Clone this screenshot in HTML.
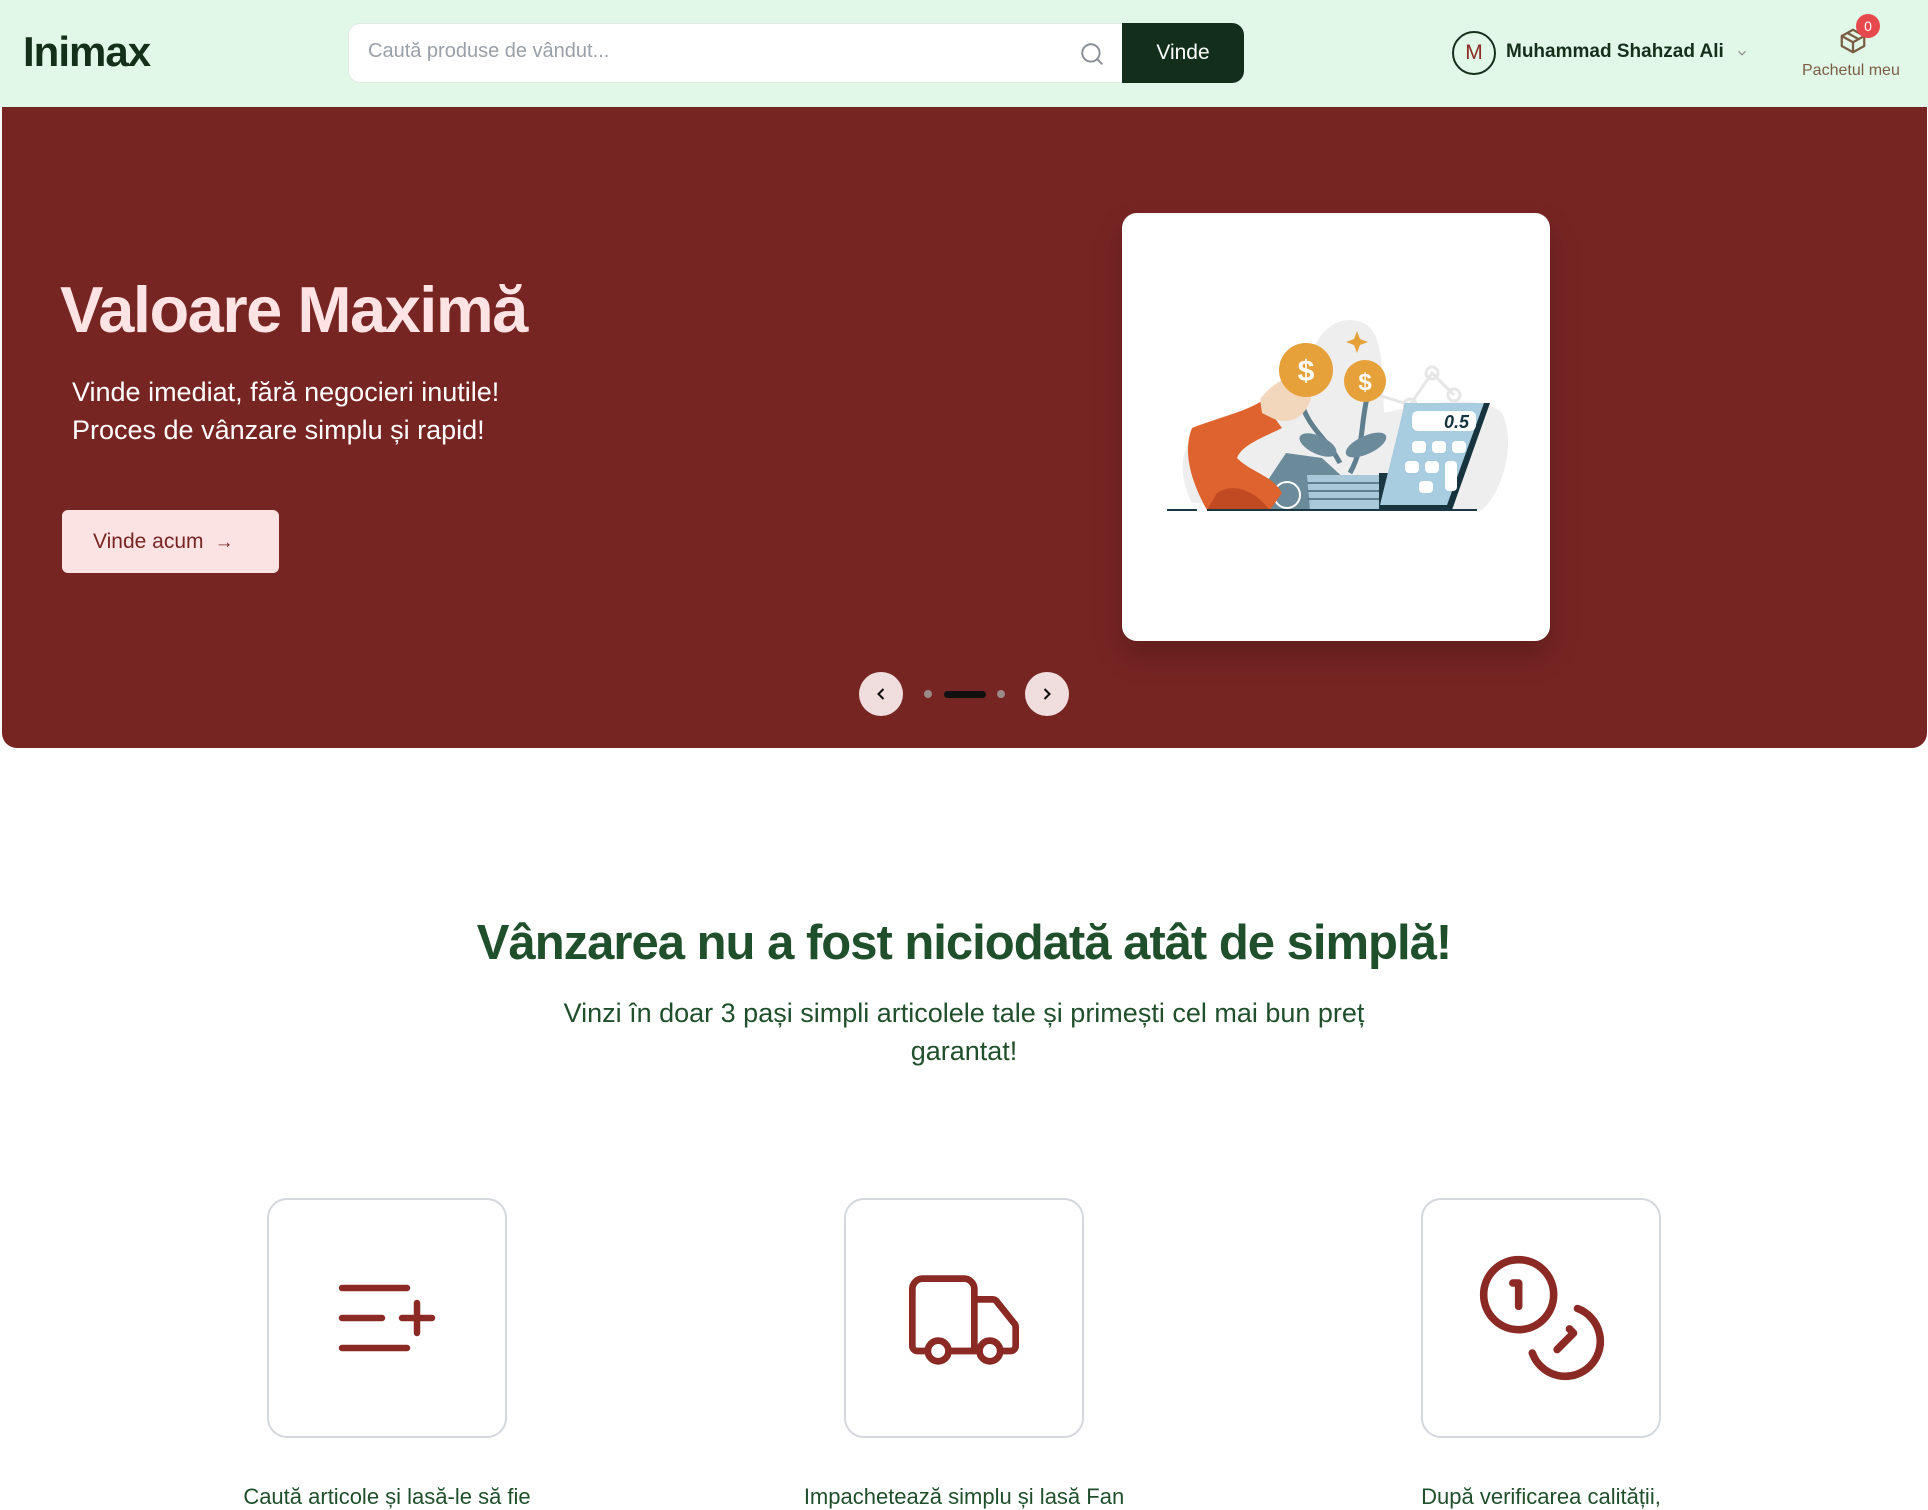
<!DOCTYPE html>
<html><head><meta charset="utf-8"><style>
*{margin:0;padding:0;box-sizing:border-box}
body{width:1928px;height:1508px;overflow:hidden;background:#fff;font-family:"Liberation Sans",sans-serif;position:relative}
.a{position:absolute}
</style></head><body>
<div class="a" style="left:0;top:0;width:1928px;height:107px;background:#e1f8e8"></div>
<div class="a" style="left:23px;top:28px;font-size:42px;font-weight:bold;color:#14301b;letter-spacing:-1px">Inimax</div>
<div class="a" style="left:348px;top:23px;width:800px;height:60px;background:#fff;border:1px solid #e2e8e4;border-radius:12px"></div>
<div class="a" style="left:368px;top:40px;font-size:20px;color:#9aa0a8">Caută produse de vândut...</div>
<svg class="a" style="left:1079px;top:41px" width="26" height="26" viewBox="0 0 24 24" fill="none" stroke="#8a8f96" stroke-width="1.8" stroke-linecap="round"><circle cx="11" cy="11" r="8"/><path d="m21 21-4.3-4.3"/></svg>
<div class="a" style="left:1122px;top:23px;width:122px;height:60px;background:#132f1b;border-radius:0 12px 12px 0;color:#fff;font-size:21px;line-height:60px;text-align:center">Vinde</div>
<div class="a" style="left:1452px;top:31px;width:44px;height:44px;border:2px solid #14301b;border-radius:50%;color:#8b2a24;font-size:21px;line-height:40px;text-align:center">M</div>
<div class="a" style="left:1506px;top:41px;font-size:19px;font-weight:bold;color:#14301b">Muhammad Shahzad Ali</div>
<svg class="a" style="left:1735px;top:46px" width="14" height="14" viewBox="0 0 24 24" fill="none" stroke="#888" stroke-width="2"><path d="m6 9 6 6 6-6"/></svg>
<svg class="a" style="left:1838px;top:26px" width="30" height="30" viewBox="0 0 24 24" fill="none" stroke="#7a5e44" stroke-width="1.8" stroke-linejoin="round"><path d="M21 8 12 3 3 8v8l9 5 9-5z"/><path d="M3 8l9 5 9-5M12 13v8M7.5 5.5l9 5"/></svg>
<div class="a" style="left:1856px;top:14px;width:24px;height:24px;background:#e5484d;border-radius:50%;color:#fff;font-size:14px;line-height:24px;text-align:center">0</div>
<div class="a" style="left:1802px;top:62px;font-size:16px;color:#7a5e44">Pachetul meu</div>

<div class="a" style="left:2px;top:107px;width:1925px;height:641px;background:#772523;border-radius:0 0 15px 15px"></div>
<div class="a" style="left:60px;top:272px;font-size:65px;font-weight:bold;color:#fde3e3;letter-spacing:-1.5px">Valoare Maximă</div>
<div class="a" style="left:72px;top:373px;font-size:27px;line-height:38px;color:#fff">Vinde imediat, fără negocieri inutile!<br>Proces de vânzare simplu și rapid!</div>
<div class="a" style="left:62px;top:510px;width:217px;height:63px;background:#fbe3e3;border-radius:6px;color:#772523;font-size:21px;line-height:63px;padding-left:31px">Vinde acum <span style="font-size:19px">&nbsp;→</span></div>

<div class="a" style="left:1122px;top:213px;width:428px;height:428px;background:#fff;border-radius:15px;box-shadow:0 15px 30px rgba(0,0,0,.2);overflow:hidden">
<svg width="428" height="428" viewBox="0 0 428 428">
<path d="M70 290 C50 250 60 210 120 198 C150 190 175 170 190 140 C200 110 225 100 245 112 C262 125 260 160 262 200 C300 190 360 180 380 200 C395 230 380 280 360 297 Z" fill="#eeeeee"/>
<path d="M250 180 L288 192 L310 160 L332 182" fill="none" stroke="#e6e6e6" stroke-width="3"/>
<circle cx="310" cy="160" r="6" fill="none" stroke="#e6e6e6" stroke-width="3"/><circle cx="332" cy="182" r="6" fill="none" stroke="#e6e6e6" stroke-width="3"/><circle cx="288" cy="192" r="6" fill="none" stroke="#e6e6e6" stroke-width="3"/>
<path d="M178 185 C185 215 205 225 218 250 M245 185 C238 215 242 235 228 260" stroke="#5f7f8f" stroke-width="5" fill="none"/>
<ellipse cx="196" cy="232" rx="20" ry="9" fill="#6b8a9a" transform="rotate(25 196 232)"/>
<ellipse cx="244" cy="232" rx="22" ry="9" fill="#6b8a9a" transform="rotate(-25 244 232)"/>
<path d="M164 240 L200 245 L225 268 L215 297 L148 297 L144 270Z" fill="#6b8a9a"/>
<circle cx="165" cy="282" r="13" fill="none" stroke="#fff" stroke-width="2"/>
<path d="M185 262 L292 262 L292 297 L188 297Z" fill="#a9c8da"/>
<path d="M185 270h107M185 278h107M185 286h107" stroke="#5f7f8f" stroke-width="2"/>
<rect x="257" y="260" width="34" height="37" fill="#1a3844"/>
<path d="M283 190 L368 190 L330 297 L258 297Z" fill="#16333e"/>
<path d="M283 190 L362 190 L325 292 L258 292Z" fill="#a9cde0"/>
<rect x="290" y="198" width="64" height="20" rx="6" fill="#fff"/>
<text x="322" y="215" font-family="Liberation Sans" font-size="18" font-style="italic" font-weight="bold" fill="#16333e">0.5</text>
<g fill="#fff"><rect x="290" y="228" width="14" height="12" rx="4"/><rect x="310" y="228" width="14" height="12" rx="4"/><rect x="330" y="228" width="14" height="12" rx="4"/><rect x="283" y="248" width="14" height="12" rx="4"/><rect x="303" y="248" width="14" height="12" rx="4"/><rect x="323" y="248" width="12" height="30" rx="4"/><rect x="297" y="268" width="14" height="12" rx="4"/></g>
<path d="M70 215 C95 205 120 200 140 188 L160 215 C140 225 120 232 115 245 C130 260 150 262 160 280 L148 297 L85 297 C70 270 60 240 70 215Z" fill="#de632e"/>
<path d="M95 280 C110 270 130 275 148 297 L85 297Z" fill="#c24a22"/>
<path d="M138 186 C150 170 170 160 185 158 C195 165 192 195 175 205 C160 212 150 205 140 200Z" fill="#f2d7bd"/>
<circle cx="184" cy="157" r="27" fill="#e6a13a"/><text x="184" y="168" text-anchor="middle" font-family="Liberation Sans" font-size="30" font-weight="bold" fill="#fff">$</text>
<circle cx="243" cy="168" r="21" fill="#e6a13a"/><text x="243" y="177" text-anchor="middle" font-family="Liberation Sans" font-size="24" font-weight="bold" fill="#fff">$</text>
<path d="M45 297h30M85 297h270" stroke="#1a3844" stroke-width="2"/>
<path d="M235 118l3 8 8 3-8 3-3 8-3-8-8-3 8-3z" fill="#e6a13a"/>
</svg></div>

<div class="a" style="left:859px;top:672px;width:44px;height:44px;background:#f0dede;border-radius:50%"></div>
<svg class="a" style="left:871px;top:684px" width="20" height="20" viewBox="0 0 24 24" fill="none" stroke="#111" stroke-width="2.5"><path d="m15 18-6-6 6-6"/></svg>
<div class="a" style="left:924px;top:690px;width:8px;height:8px;background:#9a8a8a;border-radius:50%"></div>
<div class="a" style="left:944px;top:691px;width:42px;height:7px;background:#111;border-radius:4px"></div>
<div class="a" style="left:997px;top:690px;width:8px;height:8px;background:#9a8a8a;border-radius:50%"></div>
<div class="a" style="left:1025px;top:672px;width:44px;height:44px;background:#f0dede;border-radius:50%"></div>
<svg class="a" style="left:1037px;top:684px" width="20" height="20" viewBox="0 0 24 24" fill="none" stroke="#111" stroke-width="2.5"><path d="m9 18 6-6-6-6"/></svg>

<div class="a" style="left:0;top:915px;width:1928px;text-align:center;font-size:49px;font-weight:bold;color:#1f4f2b;letter-spacing:-1px">Vânzarea nu a fost niciodată atât de simplă!</div>
<div class="a" style="left:514px;top:994px;width:900px;text-align:center;font-size:27px;line-height:38px;color:#1f4f2b">Vinzi în doar 3 pași simpli articolele tale și primești cel mai bun preț garantat!</div>

<div class="a" style="left:267px;top:1198px;width:240px;height:240px;border:2px solid #d4d7dc;border-radius:20px"></div>
<div class="a" style="left:844px;top:1198px;width:240px;height:240px;border:2px solid #d4d7dc;border-radius:20px"></div>
<div class="a" style="left:1421px;top:1198px;width:240px;height:240px;border:2px solid #d4d7dc;border-radius:20px"></div>
<svg class="a" style="left:327px;top:1258px" width="120" height="120" viewBox="0 0 24 24" fill="none" stroke="#8b2a24" stroke-width="1.3" stroke-linecap="round"><path d="M11 12H3M16 6H3M16 18H3M18 9v6M21 12h-6"/></svg>
<svg class="a" style="left:902px;top:1258px" width="124" height="124" viewBox="0 0 24 24" fill="none" stroke="#8b2a24" stroke-width="1.3" stroke-linecap="round" stroke-linejoin="round"><path d="M14 18V6a2 2 0 0 0-2-2H4a2 2 0 0 0-2 2v11a1 1 0 0 0 1 1h2M15 18H9M19 18h2a1 1 0 0 0 1-1v-3.65a1 1 0 0 0-.22-.624l-3.48-4.35A1 1 0 0 0 17.52 8H14"/><circle cx="17" cy="18" r="2"/><circle cx="7" cy="18" r="2"/></svg>
<svg class="a" style="left:1472px;top:1248px" width="140" height="140" viewBox="0 0 24 24" fill="none" stroke="#8b2a24" stroke-width="1.3" stroke-linecap="round" stroke-linejoin="round"><circle cx="8" cy="8" r="6"/><path d="M18.09 10.37A6 6 0 1 1 10.34 18M7 6h1v4M16.71 13.88l.7.71-2.82 2.82"/></svg>

<div class="a" style="left:187px;top:1484px;width:400px;text-align:center;font-size:22px;color:#1f4f2b">Caută articole și lasă-le să fie</div>
<div class="a" style="left:764px;top:1484px;width:400px;text-align:center;font-size:22px;color:#1f4f2b">Impachetează simplu și lasă Fan</div>
<div class="a" style="left:1341px;top:1484px;width:400px;text-align:center;font-size:22px;color:#1f4f2b">După verificarea calității,</div>
</body></html>
